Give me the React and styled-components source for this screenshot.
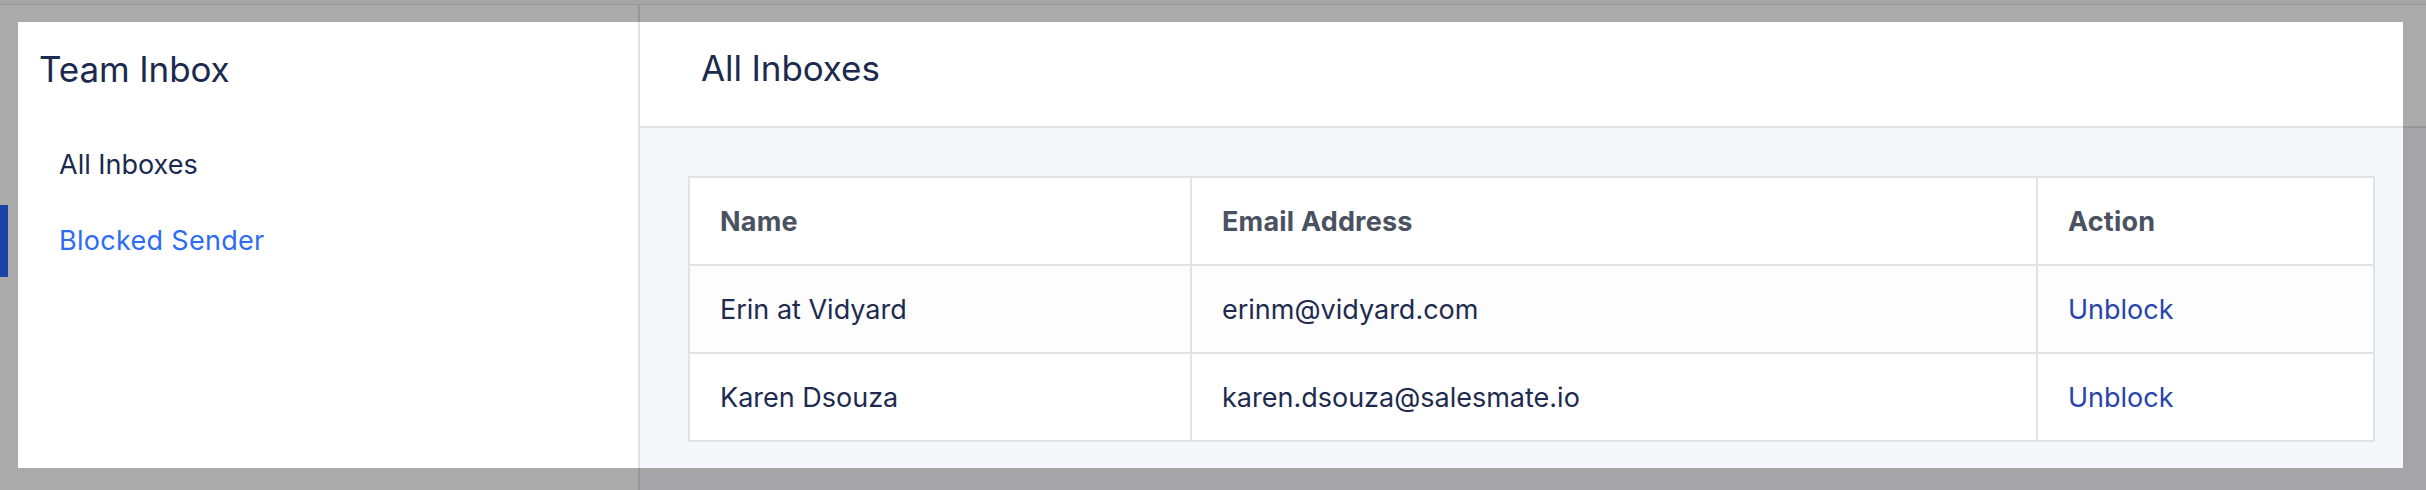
import React from "react";
import styled, { createGlobalStyle } from "styled-components";

const GlobalStyle = createGlobalStyle`
  html, body { margin: 0; padding: 0; }
  body {
    width: 2426px;
    height: 490px;
    overflow: hidden;
    font-family: Inter, "Noto Sans", sans-serif;
    -webkit-font-smoothing: antialiased;
  }
  *, *::before, *::after { box-sizing: border-box; }
`;

/* ---------- underlying (dimmed) page ---------- */
const Page = styled.div`
  position: relative;
  width: 2426px;
  height: 490px;
  display: flex;
  flex-direction: column;
  background: #ffffff;
  overflow: hidden;
`;
const UnderTopBar = styled.div`
  flex: none;
  height: 5px;
  background: #f6f6f6;
  border-bottom: 1px solid #e4e4e4;
`;
const UnderBody = styled.div`
  flex: 1;
  display: flex;
`;
const UnderNav = styled.div`
  flex: none;
  width: 640px;
  padding-top: 200px;
  background: #ffffff;
  border-right: 2px solid #e2e2e8;
`;
const UnderIndicator = styled.div`
  width: 8px;
  height: 72px;
  background: #2765fb;
`;
const UnderMain = styled.div`
  flex: 1;
  display: flex;
  flex-direction: column;
`;
const UnderHeader = styled.div`
  flex: none;
  height: 123px;
  background: #ffffff;
  border-bottom: 2px solid #e2e2e8;
`;
const UnderContent = styled.div`
  flex: 1;
  background: #f6f7fa;
`;

/* ---------- modal ---------- */
const Backdrop = styled.div`
  position: absolute;
  inset: 0;
  background: rgba(0, 0, 0, 0.33);
  display: flex;
  padding: 22px 23px 22px 18px;
`;
const Modal = styled.div`
  flex: 1;
  display: flex;
  background: #ffffff;
  color: #1b2a4e;
`;
const Sidebar = styled.aside`
  flex: none;
  width: 622px;
  padding: 27px 0 0 21px;
  border-right: 2px solid #e1e2e8;
  display: flex;
  flex-direction: column;
`;
const Title = styled.h1`
  margin: 0;
  font-size: 35px;
  line-height: 40px;
  font-weight: 400;
  color: #1b2a4e;
  letter-spacing: -0.1px;
`;
const NavList = styled.nav`
  margin-top: 38px;
  display: flex;
  flex-direction: column;
`;
const NavItem = styled.a`
  display: block;
  padding: 20px 0 20px 20px;
  font-size: 27px;
  line-height: 36px;
  color: ${(p) => (p.$active ? "#2c6cf4" : "#1b2a4e")};
  letter-spacing: ${(p) => (p.$active ? "0.3px" : "0")};
  text-decoration: none;
  cursor: pointer;
`;
const Main = styled.section`
  flex: 1;
  display: flex;
  flex-direction: column;
  min-width: 0;
`;
const Header = styled.header`
  flex: none;
  height: 106px;
  padding: 26px 0 0 61px;
  border-bottom: 2px solid #e1e2e8;
`;
const Content = styled.div`
  flex: 1;
  background: #f6f7fa;
  padding: 48px 28px 26px 48px;
`;
const Table = styled.div`
  display: grid;
  grid-template-columns: 502px 846px 1fr;
  border-top: 2px solid #e1e2e8;
  border-left: 2px solid #e1e2e8;
  background: #ffffff;
`;
const Cell = styled.div`
  height: 88px;
  display: flex;
  align-items: center;
  padding: 2px 30px 0 30px;
  border-right: 2px solid #e1e2e8;
  border-bottom: 2px solid #e1e2e8;
  background: ${(p) => (p.$striped ? "#fdfdfe" : "#ffffff")};
  font-size: 27px;
  line-height: 36px;
  font-weight: ${(p) => (p.$head ? 700 : 400)};
  letter-spacing: ${(p) => (p.$head ? "0.2px" : "0")};
  color: ${(p) => (p.$head ? "#4a5261" : "#1e2b4f")};
  white-space: nowrap;
`;
const UnblockLink = styled.a`
  color: #2845ab;
  text-decoration: none;
  cursor: pointer;
`;

const rows = [
  { name: "Erin at Vidyard", email: "erinm@vidyard.com" },
  { name: "Karen Dsouza", email: "karen.dsouza@salesmate.io" },
];

export default function App() {
  return (
    <>
      <GlobalStyle />
      <Page>
        <UnderTopBar />
        <UnderBody>
          <UnderNav>
            <UnderIndicator />
          </UnderNav>
          <UnderMain>
            <UnderHeader />
            <UnderContent />
          </UnderMain>
        </UnderBody>
        <Backdrop>
          <Modal>
            <Sidebar>
              <Title>Team Inbox</Title>
              <NavList>
                <NavItem>All Inboxes</NavItem>
                <NavItem $active>Blocked Sender</NavItem>
              </NavList>
            </Sidebar>
            <Main>
              <Header>
                <Title>All Inboxes</Title>
              </Header>
              <Content>
                <Table role="table">
                  <Cell $head role="columnheader">Name</Cell>
                  <Cell $head role="columnheader">Email Address</Cell>
                  <Cell $head role="columnheader">Action</Cell>
                  {rows.map((r, i) => (
                    <React.Fragment key={r.email}>
                      <Cell $striped={i % 2 === 0} role="cell">{r.name}</Cell>
                      <Cell $striped={i % 2 === 0} role="cell">{r.email}</Cell>
                      <Cell $striped={i % 2 === 0} role="cell">
                        <UnblockLink>Unblock</UnblockLink>
                      </Cell>
                    </React.Fragment>
                  ))}
                </Table>
              </Content>
            </Main>
          </Modal>
        </Backdrop>
      </Page>
    </>
  );
}
